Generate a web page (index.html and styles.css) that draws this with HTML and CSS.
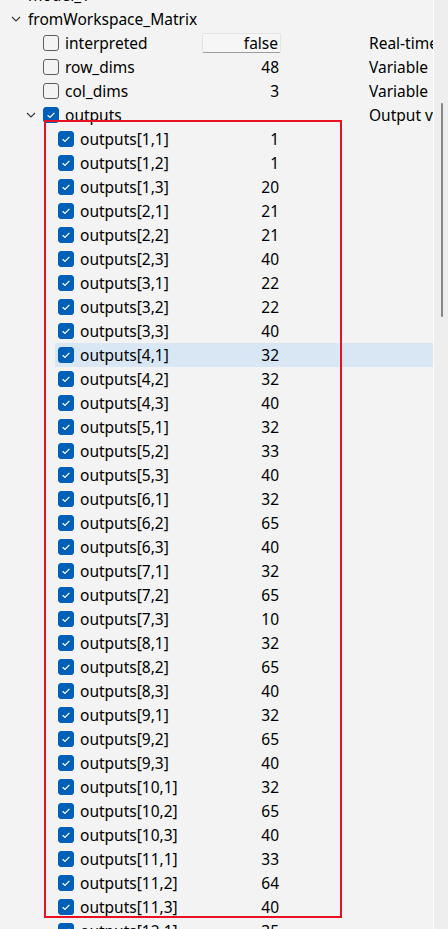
FILE: index.html
```html
<!DOCTYPE html>
<html lang="en">
<head>
    <meta charset="UTF-8">
    <title>Block Parameters</title>
    <link rel="stylesheet" href="styles.css">
</head>
<body>
    <div class="panel">
        <div class="tree">
            <div class="row lvl0">
                <div class="name"><span class="exp"><svg width="10" height="6" viewBox="0 0 10 6"><path d="M1 1 L5 5 L9 1" /></svg></span>model_1</div>
                <div class="val"></div><div class="gap"></div><div class="desc"></div>
            </div>
            <div class="row lvl0">
                <div class="name"><span class="exp"><svg width="10" height="6" viewBox="0 0 10 6"><path d="M1 1 L5 5 L9 1" /></svg></span>fromWorkspace_Matrix</div>
                <div class="val"></div><div class="gap"></div><div class="desc"></div>
            </div>
            <div class="row lvl1">
                <div class="name"><span class="cb"></span>interpreted</div>
                <div class="val"><span class="field">false</span></div><div class="gap"></div><div class="desc">Real-time</div>
            </div>
            <div class="row lvl1">
                <div class="name"><span class="cb"></span>row_dims</div>
                <div class="val">48</div><div class="gap"></div><div class="desc">Variable</div>
            </div>
            <div class="row lvl1">
                <div class="name"><span class="cb"></span>col_dims</div>
                <div class="val">3</div><div class="gap"></div><div class="desc">Variable</div>
            </div>
            <div class="row lvl1">
                <div class="name"><span class="exp"><svg width="10" height="6" viewBox="0 0 10 6"><path d="M1 1 L5 5 L9 1" /></svg></span><span class="cb on"></span>outputs</div>
                <div class="val"></div><div class="gap"></div><div class="desc">Output values</div>
            </div>
            <div id="outputs"></div>
        </div>
        <div class="scrollbar"><div class="thumb"></div></div>
    </div>
    <div class="mark"></div>

    <script>
        var values = [
            ["1,1", 1], ["1,2", 1], ["1,3", 20],
            ["2,1", 21], ["2,2", 21], ["2,3", 40],
            ["3,1", 22], ["3,2", 22], ["3,3", 40],
            ["4,1", 32], ["4,2", 32], ["4,3", 40],
            ["5,1", 32], ["5,2", 33], ["5,3", 40],
            ["6,1", 32], ["6,2", 65], ["6,3", 40],
            ["7,1", 32], ["7,2", 65], ["7,3", 10],
            ["8,1", 32], ["8,2", 65], ["8,3", 40],
            ["9,1", 32], ["9,2", 65], ["9,3", 40],
            ["10,1", 32], ["10,2", 65], ["10,3", 40],
            ["11,1", 33], ["11,2", 64], ["11,3", 40],
            ["12,1", 35]
        ];

        var list = document.getElementById("outputs");
        values.forEach(function(item) {
            var row = document.createElement("div");
            row.className = "row lvl2";
            if (item[0] === "4,1") {
                row.className += " selected";
            }
            row.innerHTML =
                '<div class="name"><span class="cb on"></span>outputs[' + item[0] + ']</div>' +
                '<div class="val">' + item[1] + '</div><div class="gap"></div><div class="desc"></div>';
            list.appendChild(row);
        });
    </script>
</body>
</html>
```

FILE: styles.css
```css
body {
    margin: 0;
    background-color: #f3f3f3;
    font-family: "Noto Sans", Arial, sans-serif;
    font-size: 15.5px;
    color: #000;
    overflow: hidden;
}
.panel {
    display: flex;
    height: 929px;
    overflow: hidden;
}
.tree {
    width: 433px;
    margin-top: -17px;
    border-right: 1px solid #fbfbfb;
}
.row {
    display: flex;
    height: 24px;
    line-height: 24px;
    margin-left: calc(var(--x) - 3px);
    padding-left: 3px;
    white-space: nowrap;
}
.lvl0 { --x: 28px; }
.lvl1 { --x: 43px; }
.lvl2 { --x: 58px; }
.row.selected {
    background-color: #d9e7f4;
}
.name {
    display: flex;
    align-items: center;
    width: calc(202px - var(--x));
}
.exp {
    display: flex;
    align-items: center;
    justify-content: center;
    width: 14px;
    margin-left: -19px;
    margin-right: 5px;
}
.exp path {
    fill: none;
    stroke: #3a3a3a;
    stroke-width: 1.2;
}
.cb {
    width: 14px;
    height: 14px;
    border: 1px solid #5e5e5e;
    border-radius: 3px;
    margin-right: 6px;
    flex-shrink: 0;
}
.cb.on {
    border-color: #005fb8;
    background: #005fb8 url("data:image/svg+xml,%3Csvg xmlns='http://www.w3.org/2000/svg' width='14' height='14'%3E%3Cpath d='M3.6 7.3 L6 9.5 L10.4 4.8' fill='none' stroke='white' stroke-width='1.2'/%3E%3C/svg%3E") no-repeat center;
}
.val {
    width: 79px;
    text-align: right;
    padding-right: 2px;
    box-sizing: border-box;
}
.field {
    display: block;
    height: 18px;
    line-height: 18px;
    margin: 2px -2px 0 0;
    padding-right: 2px;
    background-color: #f6f6f6;
    border: 1px solid #e4e4e4;
    border-bottom-color: #9c9c9c;
    border-radius: 2px;
}
.gap {
    width: 88px;
}
.desc {
    width: 64px;
    overflow: hidden;
}
.scrollbar {
    width: 14px;
    background-color: #eeeeee;
    padding-top: 103px;
}
.thumb {
    width: 2px;
    height: 214px;
    margin-left: 7px;
    background-color: #858585;
    border-radius: 1px;
}
.mark {
    position: absolute;
    left: 44px;
    top: 120px;
    width: 294px;
    height: 794px;
    border: 2px solid #e81123;
}
```
